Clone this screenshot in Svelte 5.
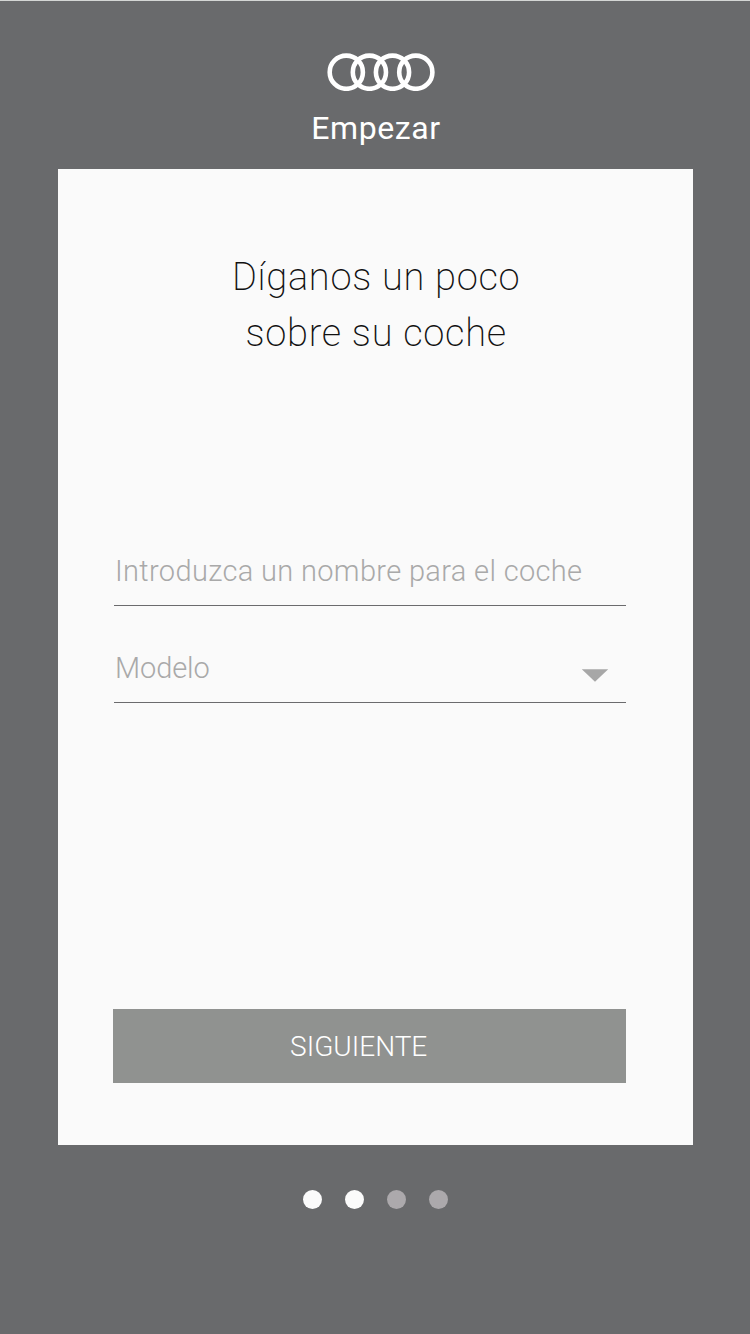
<script lang="ts">
  let carName = $state("");
  let step = $state(2);

  const rings = [19.3, 42.4, 65.5, 88.8];
  const steps = [1, 2, 3, 4];
</script>

<main class="screen">
  <header class="header">
    <svg class="logo" width="108" height="38" viewBox="0 0 108 38" aria-label="Audi">
      {#each rings as cx}
        <circle {cx} cy="19.2" r="16.6" />
      {/each}
    </svg>
    <h1 class="header__title">Empezar</h1>
  </header>

  <section class="card">
    <h2 class="card__title">Díganos un poco<br />sobre su coche</h2>

    <div class="fields">
      <input class="field" type="text" placeholder="Introduzca un nombre para el coche" bind:value={carName} />
      <button class="field field--select">
        <span class="field__label">Modelo</span>
        <svg class="field__arrow" width="28" height="13" viewBox="0 0 28 13"><path d="M0.8 0.3H27.2L14 12.7Z" /></svg>
      </button>
    </div>

    <button class="next" onclick={() => (step = Math.min(step + 1, steps.length))}>
      <span>SIGUIENTE</span>
    </button>
  </section>

  <nav class="dots">
    {#each steps as n}
      <span class="dot" class:dot--on={n <= step}></span>
    {/each}
  </nav>
</main>

<style>
  .screen {
    box-sizing: border-box;
    display: flex;
    flex-direction: column;
    width: 750px;
    height: 1334px;
    background: #696a6c;
    border-top: 1px solid #d4d6d5;
    font-family: Roboto, "Liberation Sans", sans-serif;
    overflow: hidden;
  }

  .header {
    display: flex;
    flex-direction: column;
    align-items: center;
    height: 168px;
    padding-top: 52px;
    box-sizing: border-box;
  }

  .logo {
    margin-left: 12px;
    fill: none;
    stroke: #fff;
    stroke-width: 4.6;
  }

  .header__title {
    margin: 17px 0 0 2px;
    color: #fff;
    font-size: 32px;
    line-height: 40px;
    font-weight: 400;
    letter-spacing: 0.6px;
  }

  .card {
    box-sizing: border-box;
    display: flex;
    flex-direction: column;
    width: 635.4px;
    height: 976.4px;
    margin-left: 58px;
    padding: 80px 67px 62px 55px;
    background: #fafafa;
  }

  .card__title {
    margin: 0 0 0 13px;
    color: #111;
    font-size: 38px;
    line-height: 56px;
    font-weight: 200;
    letter-spacing: 0.75px;
    text-align: center;
  }

  .fields {
    margin: 176px 0 0 1px;
  }

  .field {
    box-sizing: border-box;
    display: flex;
    width: 100%;
    height: 69px;
    padding: 0 0 1px 1px;
    background: none;
    border: none;
    border-bottom: 1px solid #6b6b6d;
    border-radius: 0;
    outline: none;
    color: #a9a9a9;
    font: 300 29px Roboto, sans-serif;
    letter-spacing: 0.34px;
  }

  .field::placeholder {
    color: #a9a9a9;
    opacity: 1;
  }

  .field--select {
    align-items: center;
    justify-content: space-between;
    height: 97px;
    padding: 27px 17px 0 1px;
  }

  .field__label {
    letter-spacing: -0.1px;
  }

  .field__arrow {
    margin-top: 15px;
    fill: #a7a7a7;
  }

  .next {
    height: 74px;
    margin-top: auto;
    padding: 0 22px 0 0;
    background: #909290;
    border: none;
    color: #fff;
    font: 300 28px Roboto, sans-serif;
  }

  .dots {
    display: flex;
    gap: 23px;
    margin: 45px 0 0 303px;
  }

  .dot {
    width: 19px;
    height: 19px;
    border-radius: 50%;
    background: #aca9ac;
  }

  .dot--on {
    background: #fbfbfb;
  }
</style>
